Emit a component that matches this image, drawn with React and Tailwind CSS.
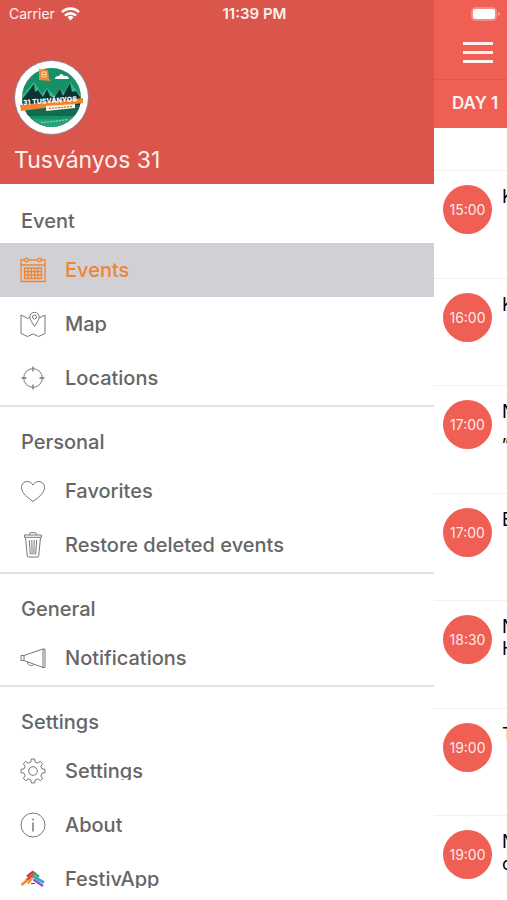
import React from "react";

const line = {
  width: 26,
  height: 26,
  viewBox: "0 0 26 26",
  fill: "none",
  stroke: "currentColor",
  strokeWidth: 1,
  "aria-hidden": true,
};

const CalendarIcon = () => (
  <svg {...line} strokeWidth="1.300">
    <path d="M4.700 3H1v21.500h24V3h-3.700M8.300 3h9.400M1 8h24" />
    <circle cx="6.500" cy="3" r="1.800" />
    <circle cx="19.500" cy="3" r="1.800" />
    <path d="M4.500 11h17v10.500h-17zM4.500 14.500h17M4.500 18h17M8 11v10.500M11.300 11v10.500M14.700 11v10.500M18 11v10.500" />
  </svg>
);

const MapIcon = () => (
  <svg {...line}>
    <path d="M9.500 6.500 7.500 7.300 1 4v18.500l6.500 3 5.500-2.600 5.500 2.600 6.500-3V4l-5.500 2.800" />
    <path d="M14.500 15.500C12.500 11.800 9.800 9 9.800 6a4.700 4.700 0 0 1 9.400 0c0 3-2.700 5.800-4.700 9.500z" />
    <circle cx="14.500" cy="6" r="2" />
  </svg>
);

const TargetIcon = () => (
  <svg {...line}>
    <circle cx="13" cy="13" r="9.300" />
    <path d="M13 1.500v5M13 19.500v5M1.500 13h5M19.500 13h5" strokeWidth="1.300" />
  </svg>
);

const HeartIcon = () => (
  <svg {...line}>
    <path d="M13 23.500C8 19.500 1.500 15.500 1.500 9.500c0-3.600 2.600-6 5.700-6 2.600 0 4.600 1.300 5.800 3.600 1.200-2.300 3.200-3.600 5.800-3.600 3.100 0 5.700 2.400 5.700 6 0 6-6.500 10-11.500 14z" />
  </svg>
);

const TrashIcon = () => (
  <svg {...line}>
    <path d="M4.500 3h17v2.300h-17zM9.500 3V1.700q0-1 1-1h5q1 0 1 1V3M5.500 5.500 7.300 24q.1 1 1.200 1h9q1.100 0 1.200-1l1.800-18.500M9.300 8l1 14.500M11.800 8l.3 14.500M14.200 8l-.3 14.500M16.700 8l-1 14.500" />
  </svg>
);

const MegaphoneIcon = () => (
  <svg {...line}>
    <path d="M4 10.500 23 4v18.500L4 15.500zM23 4h2v18.500h-2M4 10.500H1v5h3M7.500 17c0 4 5.500 4.500 6.500 2.200" />
  </svg>
);

const GearIcon = () => (
  <svg {...line} strokeLinejoin="round">
    <circle cx="13" cy="13" r="4.300" />
    <path d="M10.900 4 11.300 1h3.400l.4 3 2.800 1.200 2.400-1.900 2.400 2.400-1.900 2.400L22 10.900l3 .4v3.400l-3 .4-1.200 2.800 1.900 2.400-2.400 2.400-2.400-1.900-2.800 1.200-.4 3h-3.400l-.4-3-2.800-1.200-2.400 1.900-2.400-2.400 1.900-2.400L4 15.100l-3-.4v-3.400l3-.4 1.200-2.800-1.900-2.400 2.400-2.400 2.400 1.900z" />
  </svg>
);

const InfoIcon = () => (
  <svg {...line}>
    <circle cx="13" cy="13" r="12" />
    <path d="M13 10.500v9" strokeWidth="1.500" />
    <circle cx="13" cy="7.500" r=".6" fill="currentColor" />
  </svg>
);

const FestivIcon = () => (
  <svg {...line} strokeWidth="2.600">
    <path d="M13 6l6 5" stroke="#43ac4b" />
    <path d="M7 10.500 13.500 5.500" stroke="#e0304a" />
    <path d="M6 14.500 14 8.500" stroke="#dd3a3c" />
    <path d="M1.500 19 8 13.500" stroke="#f28a2f" />
    <path d="M8 17.500 12.500 11.500" stroke="#f6a02e" />
    <path d="M12.500 10 24 16.500" stroke="#35a4dc" />
    <path d="M13.500 13.500 23 20" stroke="#8b55c5" />
    <path d="M11 17.500h4" stroke="#55515f" strokeWidth="1" />
  </svg>
);

const Logo = () => (
  <svg width="75" height="75" viewBox="0 0 75 75" role="img" aria-label="Tusványos 31 logo">
    <circle cx="37.500" cy="37.500" r="37" fill="#fff" stroke="#8d7f83" />
    <clipPath id="disc"><circle cx="37.500" cy="37.500" r="29.500" /></clipPath>
    <g clipPath="url(#disc)">
      <path fill="#169066" d="M0 0h75v75H0z" />
      <path fill="#35b98a" d="M6 38 20 22l8 12 5-6 8 8 5-7 4 4 6-11 15 19v6H6z" />
      <path fill="#0c3436" d="m6 42 14-18 1 8 3-2 5 7 4-8 3 7 4 2 6-9 3 7 7-13 2 9 4-1 8 12v7H6z" />
      <path fill="#116b53" d="M5 45h65v11H5z" />
      <path fill="#29a47a" d="M5 57q31 6 65-2v20H5z" />
      <path d="M27 62.500q14-1 27-3" stroke="#a1dbc1" strokeDasharray="2 1" fill="none" />
    </g>
    <path fill="#f08a35" d="m25 9 9 1 1 9 2 2-12-1z" />
    <path d="M28 12h4v5h-4zM28 14.500h4" stroke="#ffd7a6" fill="none" />
    <path fill="#fff" d="M41 19q0-3 4-3 2-4 5 0 4-1 5 3z" />
    <path fill="#f08432" d="m6 45 63-7v5L7 51z" />
    <path fill="#fff3df" d="m32 46 29-2v4l-29 3z" />
    <path d="m35 48.500 23-2" stroke="#a65a38" strokeDasharray="2 1" />
    <text x="9" y="45" transform="rotate(-4 9 45)" fill="#fff" fontSize="7" fontWeight="800" fontFamily="Inter, sans-serif">31 TUSVÁNYOS</text>
  </svg>
);

const sections = [
  { title: "Event", items: [["Events", CalendarIcon], ["Map", MapIcon], ["Locations", TargetIcon]] },
  { title: "Personal", items: [["Favorites", HeartIcon], ["Restore deleted events", TrashIcon]] },
  { title: "General", items: [["Notifications", MegaphoneIcon]] },
  { title: "Settings", items: [["Settings", GearIcon], ["About", InfoIcon], ["FestivApp", FestivIcon]] },
];

const schedule = [
  ["15:00", "K"],
  ["16:00", "K"],
  ["17:00", "N", "„"],
  ["17:00", "E"],
  ["18:30", "N", "H"],
  ["19:00", "T"],
  ["19:00", "N", "c"],
];

function StatusBar() {
  return (
    <div className="absolute inset-x-0 top-0 z-10 grid h-7 grid-cols-3 items-center pr-[7px] pl-[9px] text-[14px] leading-5 text-[#fff0ee]">
      <div className="flex items-center gap-[6px]">
        <span>Carrier</span>
        <svg width="19" height="14" viewBox="0 0 19 14" fill="none" stroke="#fff" strokeWidth="2.600" aria-hidden="true">
          <path d="M1 5.200a12 12 0 0 1 17 0M4 8.600a7.800 7.800 0 0 1 11 0" />
          <path d="m9.500 13.500-3-3.200a4.300 4.300 0 0 1 6 0z" fill="#fff" stroke="none" />
        </svg>
      </div>
      <span className="text-center text-[15px] font-semibold">11:39 PM</span>
      <svg className="justify-self-end" width="29" height="14" viewBox="0 0 29 14" aria-hidden="true">
        <rect x=".5" y=".5" width="25" height="13" rx="4" fill="#f58c84" stroke="#f58c84" />
        <rect x="2" y="2" width="22" height="10" rx="2.500" fill="#fff" />
        <path d="M27 5v4q2-1 2-2t-2-2z" fill="#f7a19a" />
      </svg>
    </div>
  );
}

function MenuItem({ label, Icon, active }) {
  return (
    <li>
      <a
        href="#"
        aria-current={active ? "page" : undefined}
        className={`flex h-[54px] items-center gap-[19px] pl-5 ${active ? "bg-[#d1d0d5] text-[#ee8534]" : "text-[#666]"}`}
      >
        <span className={active ? "" : "text-[#777]"}><Icon /></span>
        <span className="h-[18px] overflow-hidden text-[20px] leading-[18px] font-medium whitespace-nowrap">{label}</span>
      </a>
    </li>
  );
}

export default function App() {
  return (
    <div className="relative flex h-screen overflow-hidden bg-white font-['Inter',sans-serif]">
      <StatusBar />
      <aside className="min-w-0 flex-1">
        <header className="flex h-[184px] flex-col justify-end bg-[#da564c] px-[14px] pb-2 text-[#fff0ee]">
          <Logo />
          <h1 className="mt-[9px] text-[23px] leading-8">Tusványos 31</h1>
        </header>
        <nav>
          {sections.map(({ title, items }, s) => (
            <section key={title} className={s ? "border-t-2 border-[#e2e2e2]" : "border-t-2 border-transparent"}>
              <h2 className="flex h-[57px] items-center pt-3 pl-[21px] text-[20px] leading-6 font-medium text-[#666]">{title}</h2>
              <ul>
                {items.map(([label, Icon], i) => (
                  <MenuItem key={label} label={label} Icon={Icon} active={s === 0 && i === 0} />
                ))}
              </ul>
            </section>
          ))}
        </nav>
      </aside>
      <main className="w-[73px] shrink-0 overflow-hidden">
        <div className="flex h-20 items-end border-b border-[#df574c] bg-[#ef5f53] pb-4 pl-[29px]">
          <button type="button" aria-label="Menu" className="flex w-[30px] flex-col gap-[6px]">
            <span className="h-[3px] w-full bg-[#fff0ee]" />
            <span className="h-[3px] w-full bg-[#fff0ee]" />
            <span className="h-[3px] w-full bg-[#fff0ee]" />
          </button>
        </div>
        <button type="button" className="flex h-12 w-full items-center bg-[#ef5f53] pl-[18px] text-[17px] font-semibold whitespace-nowrap text-[#fff0ee]">
          DAY 1
        </button>
        <ol className="pt-[42px]">
          {schedule.map(([time, ...title], i) => (
            <li key={i} className="flex items-start gap-[10px] border-t border-[#f0f0f0] pl-[9px] odd:h-[108px] even:h-[107px]">
              <time className="mt-[14px] flex size-[49px] shrink-0 items-center justify-center rounded-full bg-[#ef5f53] text-[14px] text-[#ffe9e6]">
                {time}
              </time>
              <div className="mt-[15px] text-[18px] leading-[22px] text-black">
                {title.map((t) => <p key={t}>{t}</p>)}
              </div>
            </li>
          ))}
        </ol>
      </main>
    </div>
  );
}
